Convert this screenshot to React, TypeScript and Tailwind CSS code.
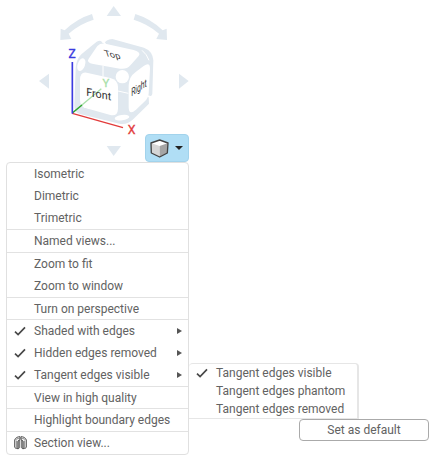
import { Fragment } from "react";

type Item = {
  label: string;
  checked?: boolean;
  submenu?: boolean;
  icon?: boolean;
};

type Group = { compact?: boolean; items: Item[] };

const groups: Group[] = [
  { items: [{ label: "Isometric" }, { label: "Dimetric" }, { label: "Trimetric" }] },
  { items: [{ label: "Named views..." }] },
  { items: [{ label: "Zoom to fit" }, { label: "Zoom to window" }] },
  { compact: true, items: [{ label: "Turn on perspective" }] },
  {
    items: [
      { label: "Shaded with edges", checked: true, submenu: true },
      { label: "Hidden edges removed", checked: true, submenu: true },
      { label: "Tangent edges visible", checked: true, submenu: true },
    ],
  },
  { compact: true, items: [{ label: "View in high quality" }] },
  { items: [{ label: "Highlight boundary edges" }] },
  { items: [{ label: "Section view...", icon: true }] },
];

const tangentOptions: Item[] = [
  { label: "Tangent edges visible", checked: true },
  { label: "Tangent edges phantom" },
  { label: "Tangent edges removed" },
];

function Check() {
  return (
    <svg aria-hidden="true" viewBox="0 0 12 10" className="h-[10px] w-[12px] fill-none stroke-[#484848]">
      <path d="M1 5.6 4.1 8.6 11 1.4" strokeWidth="1.7" />
    </svg>
  );
}

function SectionIcon() {
  return (
    <svg aria-hidden="true" viewBox="0 0 39 42" className="h-[14px] w-[13px] fill-[#f2f2f2] stroke-[#555]" strokeWidth="3">
      <path d="M2 12C4 5 11 2 18 2v9l-6 4v23C6 38 2 36 2 33Z" />
      <path d="M37 12C35 5 28 2 21 2v9l6 4v23c6 0 10-2 10-5Z" />
      <path d="M12 39V16l5-4v23ZM27 39V16l-5-4v23Z" fill="#999" strokeWidth="2" />
      <path d="M7 14v22M32 14v22M5 11c4-3 8-4 12-4M34 11c-4-3-8-4-12-4" fill="none" strokeWidth="2" />
    </svg>
  );
}

function ViewCube() {
  return (
    <svg role="img" aria-label="View cube" viewBox="0 0 567 486" className="block h-[162px] w-[189px]">
      <g fill="#e0e8ef">
        <path d="M341 18 363 48H320Z" />
        <path d="M341 468 363 438H320Z" />
        <path d="M117 243 147 221V266Z" />
        <path d="M566 243 537 221V266Z" />
        <path d="M276 42 281 59Q238 72 206 101L214 117 181 120 182 86 194 91Q230 56 276 42Z" />
        <path d="M406 42 401 59Q444 72 477 101L469 117 501 120 500 86 488 91Q452 56 406 42Z" />
        <path d="M290 125Q303 118 307 128L314 130Q316 119 337 117L432 143Q458 153 460 181L457 281Q455 290 446 291L447 311 398 359Q381 375 358 371L240 342Q223 337 223 317L227 205Q228 178 245 162Z" />
      </g>
      <g fill="#fff">
        <path d="M292 138Q301 129 316 131L401 150Q425 157 416 168L392 195Q380 209 360 206L280 192Q258 187 266 176Z" />
        <path d="M260 218 331 234Q353 239 354 261V326Q353 350 331 345L259 325Q240 319 240 299V239Q241 214 260 218Z" />
        <path d="M407 216 431 198Q450 184 450 206L446 281Q445 294 433 305L408 329Q386 348 386 321V256Q387 230 407 216Z" />
        <circle cx="367" cy="230" r="20" />
        <ellipse cx="244" cy="194" rx="11" ry="20" transform="rotate(20 244 194)" />
        <ellipse cx="366" cy="353" rx="22" ry="8" transform="rotate(-8 366 353)" />
      </g>
      <g fill="none" stroke="#fff" strokeWidth="3">
        <path d="M309 197V230M354 273 385 280M426 151Q441 163 447 181" />
        <path d="M307 122 316 133M443 288 462 294" strokeWidth="5" />
      </g>
      <g fill="none" strokeWidth="4">
        <path d="M217 339 304 266" stroke="#a9dfa9" />
        <path d="M217 339 246 315" stroke="#2ca52c" />
        <path d="M217 340 369 383" stroke="#e23b3b" />
        <path d="M217 341V186" stroke="#3c3ce0" strokeWidth="5" />
      </g>
      <g className="font-[Roboto,sans-serif]" textAnchor="middle">
        <text transform="matrix(.98 .2 0 1 296 294)" fontSize="33" fill="#333">Front</text>
        <text transform="matrix(.96 .2 .3 .9 340 173)" fontSize="29" fill="#333">Top</text>
        <text transform="matrix(.64 -.42 0 1.05 417 274)" fontSize="32" fill="#333">Right</text>
        <text x="216" y="173" fontSize="36" fill="#3c3ce0" stroke="#3c3ce0">Z</text>
        <text x="318" y="261" fontSize="34" fill="#a9dfa9" stroke="#a9dfa9">Y</text>
        <text x="395" y="403" fontSize="37" fill="#e23b3b" stroke="#e23b3b">X</text>
      </g>
    </svg>
  );
}

function Submenu() {
  return (
    <div className="absolute left-full top-0 z-10 -mt-px ml-px w-[170px]">
      <div role="menu" aria-label="Tangent edges" className="rounded-t border border-l-0 border-r-2 border-[#e6e6e6] bg-white">
        {tangentOptions.map((option) => (
          <button key={option.label} type="button" role="menuitemradio" aria-checked={!!option.checked} className="flex h-[18px] w-full items-center whitespace-nowrap text-left">
            <span className="flex w-[27px] shrink-0 pl-[7px]">{option.checked && <Check />}</span>
            {option.label}
          </button>
        ))}
      </div>
      <button type="button" className="ml-[110px] block h-[22px] w-[130px] rounded border border-[#aaa] bg-white text-center">
        Set as default
      </button>
    </div>
  );
}

export default function App() {
  return (
    <main className="min-h-screen bg-white font-[Roboto,sans-serif] text-[12px] leading-4 text-[#626262]">
      <div className="relative w-[189px]">
        <ViewCube />
        <button type="button" aria-label="View options" className="absolute bottom-0 right-0 flex h-7 w-11 items-center justify-between rounded-sm border border-[#a2d3ec] bg-[#b0def5] px-1">
          <svg aria-hidden="true" viewBox="0 0 57 57" className="h-[19px] w-[19px]" strokeLinejoin="round">
            <path d="M29 3 54 12 52 42 29 54 4 42 3 12Z" fill="#fff" />
            <path d="M3 12 29 21V54L4 42Z" fill="#d6d6d6" />
            <path d="M54 12 29 21V54L52 42Z" fill="#a5a5a5" />
            <path d="M29 3 54 12 52 42 29 54 4 42 3 12Z" fill="none" stroke="#444" strokeWidth="4" />
          </svg>
          <svg aria-hidden="true" viewBox="0 0 8 4" className="mr-px h-1 w-2 fill-[#222]">
            <path d="M0 0H8L4 4Z" />
          </svg>
        </button>
      </div>
      <div role="menu" aria-label="View options" className="ml-[6px] w-[183px] rounded border border-[#e0e0e0] bg-white">
        {groups.map((group, index) => (
          <Fragment key={group.items[0].label}>
            {index > 0 && <hr className="border-[#e2e2e2]" />}
            {group.items.map((item) => (
              <div key={item.label} className="relative">
                <button
                  type="button"
                  role={item.checked ? "menuitemcheckbox" : "menuitem"}
                  aria-checked={item.checked}
                  className={`flex w-full items-center whitespace-nowrap text-left ${group.compact ? "h-[21px]" : "h-[22px]"}`}
                >
                  <span className="flex w-[27px] shrink-0 pl-[7px]">
                    {item.checked && <Check />}
                    {item.icon && <SectionIcon />}
                  </span>
                  {item.label}
                  {item.submenu && (
                    <svg aria-hidden="true" viewBox="0 0 5 6" className="ml-auto mr-[6px] h-[6px] w-[5px] fill-[#555]">
                      <path d="M0 0 5 3 0 6Z" />
                    </svg>
                  )}
                </button>
                {item.label === "Tangent edges visible" && <Submenu />}
              </div>
            ))}
          </Fragment>
        ))}
      </div>
    </main>
  );
}
